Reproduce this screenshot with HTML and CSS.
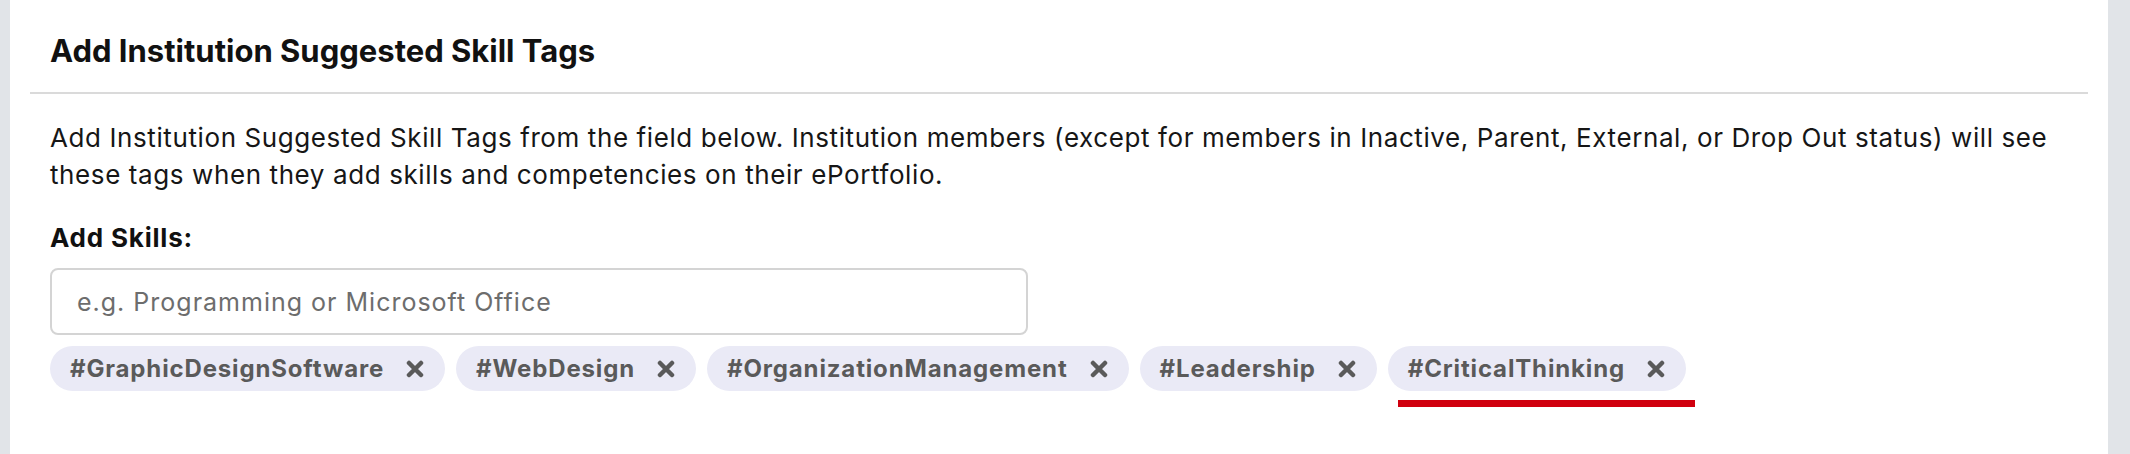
FILE: index.html
```html
<!DOCTYPE html>
<html>
    <head>
        <meta charset='UTF-8'>
        <link rel="stylesheet" href="styles.css">
    </head>
    <body>
        <section class="panel">
            <header class="panel-head">
                <h2>Add Institution Suggested Skill Tags</h2>
            </header>
            <div class="panel-body">
                <p class="intro">Add Institution Suggested Skill Tags from the field below. Institution members (except for members in Inactive, Parent, External, or Drop Out status) will see these tags when they add skills and competencies on their ePortfolio.</p>
                <label class="field-label" for="skill">Add Skills:</label>
                <input id="skill" class="skill-input" type="text" placeholder="e.g. Programming or Microsoft Office">
                <ul class="tags">
                    <li class="tag">#GraphicDesignSoftware <span class="remove"><svg viewBox="0 0 18 18"><path d="M3 3L15 15M15 3L3 15"/></svg></span></li>
                    <li class="tag">#WebDesign <span class="remove"><svg viewBox="0 0 18 18"><path d="M3 3L15 15M15 3L3 15"/></svg></span></li>
                    <li class="tag">#OrganizationManagement <span class="remove"><svg viewBox="0 0 18 18"><path d="M3 3L15 15M15 3L3 15"/></svg></span></li>
                    <li class="tag">#Leadership <span class="remove"><svg viewBox="0 0 18 18"><path d="M3 3L15 15M15 3L3 15"/></svg></span></li>
                    <li class="tag marked">#CriticalThinking <span class="remove"><svg viewBox="0 0 18 18"><path d="M3 3L15 15M15 3L3 15"/></svg></span><span class="mark"></span></li>
                </ul>
            </div>
        </section>
    </body>
</html>
```

FILE: styles.css
```css
html, body {
    height: 100%;
}

body {
    margin: 0;
    background: #e1e4e8;
    font-family: 'Inter', 'Noto Sans', sans-serif;
    color: #161616;
    -webkit-font-smoothing: antialiased;
}

.panel {
    box-sizing: border-box;
    height: 100%;
    margin: 0 22px 0 10px;
    padding: 0 20px;
    background: #fff;
}

.panel-head {
    height: 60px;
    padding: 32px 20px 0;
    border-bottom: 2px solid #dadada;
}

.panel-head h2 {
    margin: 0;
    font-size: 31px;
    line-height: 38px;
    font-weight: 700;
    color: #111;
}

.panel-body {
    padding: 0 20px;
}

.intro {
    margin: 25px 0 0;
    font-size: 26px;
    line-height: 37px;
    letter-spacing: 0.6px;
}

.field-label {
    display: block;
    margin-top: 30px;
    font-size: 26px;
    line-height: 30px;
    font-weight: 700;
    letter-spacing: 0.8px;
    color: #111;
}

.skill-input {
    display: block;
    box-sizing: border-box;
    width: 978px;
    height: 67px;
    margin-top: 15px;
    padding: 0 25px;
    border: 2px solid #d4d4d4;
    border-radius: 8px;
    font-family: inherit;
    font-size: 25px;
    letter-spacing: 1px;
    color: #333;
    outline: none;
}

.skill-input::placeholder {
    color: #6d6d6d;
}

.tags {
    display: flex;
    gap: 11px;
    margin: 11px 0 0;
    padding: 0;
    list-style: none;
}

.tag {
    position: relative;
    display: flex;
    align-items: center;
    gap: 22px;
    height: 45px;
    padding: 0 21px 0 20px;
    border-radius: 23px;
    background: #eaeaf6;
    font-size: 24px;
    font-weight: 700;
    letter-spacing: 0.85px;
    color: #5a5a5a;
}

.remove {
    display: flex;
}

.remove svg {
    width: 18px;
    height: 18px;
    fill: none;
    stroke: #5a5a5a;
    stroke-width: 4.5;
    stroke-linecap: round;
}

/* red underline annotation below the last tag */
.mark {
    position: absolute;
    left: 10px;
    right: -9px;
    top: 54px;
    height: 7px;
    background: #d0000e;
}
```
